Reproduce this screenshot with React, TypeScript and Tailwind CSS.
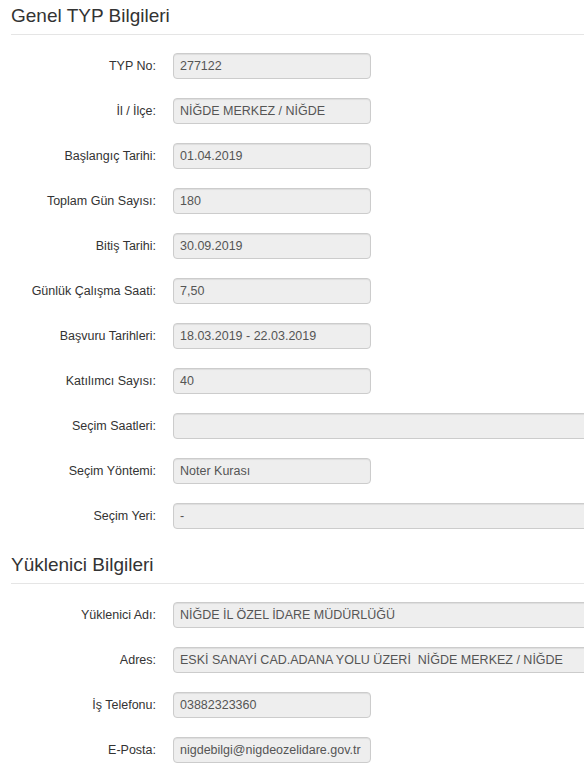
import React from "react";

type Row = { label: string; value: string; wide?: boolean };

const genel: Row[] = [
  { label: "TYP No:", value: "277122" },
  { label: "İl / İlçe:", value: "NİĞDE MERKEZ / NİĞDE" },
  { label: "Başlangıç Tarihi:", value: "01.04.2019" },
  { label: "Toplam Gün Sayısı:", value: "180" },
  { label: "Bitiş Tarihi:", value: "30.09.2019" },
  { label: "Günlük Çalışma Saati:", value: "7,50" },
  { label: "Başvuru Tarihleri:", value: "18.03.2019 - 22.03.2019" },
  { label: "Katılımcı Sayısı:", value: "40" },
  { label: "Seçim Saatleri:", value: "", wide: true },
  { label: "Seçim Yöntemi:", value: "Noter Kurası" },
  { label: "Seçim Yeri:", value: "-", wide: true },
];

const yuklenici: Row[] = [
  { label: "Yüklenici Adı:", value: "NİĞDE İL ÖZEL İDARE MÜDÜRLÜĞÜ", wide: true },
  { label: "Adres:", value: "ESKİ SANAYİ CAD.ADANA YOLU ÜZERİ  NİĞDE MERKEZ / NİĞDE", wide: true },
  { label: "İş Telefonu:", value: "03882323360" },
  { label: "E-Posta:", value: "nigdebilgi@nigdeozelidare.gov.tr" },
];

function Field({ row }: { row: Row }) {
  return (
    <div className="flex items-center h-[26px]">
      <label className="w-[145px] shrink-0 text-right text-[12.5px] text-[#333]">{row.label}</label>
      <div
        className={[
          "ml-[17px] h-[26px] shrink-0 flex items-center px-[6px] whitespace-pre",
          "bg-[#eeeeee] border border-[#cccccc] rounded-[4px] shadow-[inset_0_1px_1px_rgba(0,0,0,0.075)]",
          "text-[12.5px] text-[#555]",
          row.wide ? "w-[520px]" : "w-[198px]",
        ].join(" ")}
      >
        {row.value}
      </div>
    </div>
  );
}

function Section({ title, rows, first }: { title: string; rows: Row[]; first?: boolean }) {
  return (
    <section className={first ? "pt-[6px]" : "pt-[26px]"}>
      {/* başlık + alt çizgi */}
      <h4 className="text-[19px] leading-[20px] font-normal text-[#333] pb-[8px] border-b border-[#e5e5e5]">
        {title}
      </h4>
      <div className="flex flex-col gap-[19px] pt-[18px]">
        {rows.map((r) => (
          <Field key={r.label} row={r} />
        ))}
      </div>
    </section>
  );
}

export default function App() {
  return (
    <div
      className="w-[584px] h-[775px] overflow-hidden bg-white pl-[11px]"
      style={{ fontFamily: '"Liberation Sans", Arial, sans-serif' }}
    >
      <Section title="Genel TYP Bilgileri" rows={genel} first />
      <Section title="Yüklenici Bilgileri" rows={yuklenici} />
    </div>
  );
}
